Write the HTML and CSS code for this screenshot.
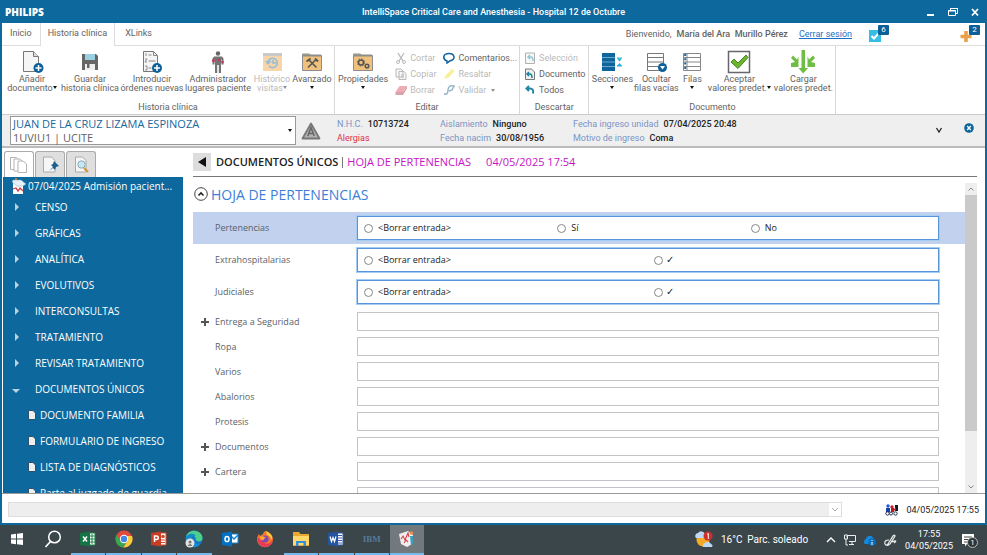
FILE: index.html
```html
<!DOCTYPE html>
<html lang="es">
<head>
<meta charset="utf-8">
<meta name="viewport" content="width=device-width, initial-scale=1">
<title>IntelliSpace Critical Care and Anesthesia</title>
<link rel="stylesheet" href="styles.css">
</head>
<body>
<div class="window">
  <header class="titlebar">
    <span class="brand">PHILIPS</span>
    <span class="title">IntelliSpace Critical Care and Anesthesia - Hospital 12 de Octubre</span>
    <div class="winbtns">
      <button aria-label="Minimizar"><svg width="12" height="12" viewBox="0 0 12 12"><path d="M2 9h7" stroke="#fff" stroke-width="2"/></svg></button>
      <button aria-label="Restaurar"><svg width="12" height="12" viewBox="0 0 12 12"><path d="M3.5 4V2.5h7v5H9M1.500 4.500h7v5h-7zM1 5h8M3 2.500h8" fill="none" stroke="#fff"/></svg></button>
      <button aria-label="Cerrar"><svg width="12" height="12" viewBox="0 0 12 12"><path d="M3 3l6 6.500M9 3l-6 6.500" stroke="#fff" stroke-width="1.800"/></svg></button>
    </div>
  </header>

  <nav class="tabs">
    <a href="#inicio">Inicio</a>
    <a href="#historia" class="active">Historia clínica</a>
    <a href="#xlinks">XLinks</a>
    <div class="session">
      <span>Bienvenido,</span><b>María del Ara&nbsp; Murillo Pérez</b>
      <a class="logout" href="#salir">Cerrar sesión</a>
      <button class="notif tasks" aria-label="Tareas"><svg width="12" height="12" viewBox="0 0 12 12"><path d="M0 0h12v12H0z" fill="#35bde4"/><path d="M2.500 6l2.500 2.500L9.500 3.500" fill="none" stroke="#fff" stroke-width="2"/></svg><span class="badge">6</span></button>
      <button class="notif alerts" aria-label="Avisos"><svg width="12" height="12" viewBox="0 0 12 12"><path d="M6 1v11M.500 6.500h11" stroke="#e9a04b" stroke-width="3.600"/></svg><span class="badge">2</span></button>
    </div>
  </nav>

  <section class="ribbon" id="historia">
    <div class="group">
      <div class="tools historia">
        <button class="tool"><svg width="24" height="24" viewBox="0 0 24 24"><path d="M3.500 1.500h10l5 5v15h-15z" fill="#f5f5f5" stroke="#777"/><path d="M13.500 1.500v5h5" fill="#ddd" stroke="#777"/><circle cx="18.500" cy="18" r="5" fill="#0d5f98"/><path d="M18.500 15v6M15.500 18h6" stroke="#fff" stroke-width="1.500"/></svg><span>Añadir<br>documento<i class="caret"></i></span></button>
        <button class="tool"><svg width="24" height="24" viewBox="0 0 24 24"><path d="M4 4h14l2 2v14H4z" fill="#666"/><path d="M7 4h10v6H7z" fill="#9bd0e2"/><path d="M7 14h10v6H7z" fill="#eee"/><path d="M9 14h2.500v4H9z" fill="#666"/></svg><span>Guardar<br>historia clínica</span></button>
        <button class="tool"><svg width="24" height="24" viewBox="0 0 24 24"><path d="M3.500 1.500h10l4 4v16h-14z" fill="#f5f5f5" stroke="#777"/><path d="M13.500 1.500v4h4M8.500 5h3M8.500 11h7M8.500 18h3" fill="none" stroke="#888"/><path d="M6 3v3M5 9h2l-2 3h2M5 16h2v4H5" fill="none" stroke="#777" stroke-width=".8"/><circle cx="17" cy="18" r="5" fill="#0d5f98"/><path d="M17 15v6M14 18h6" stroke="#fff" stroke-width="1.500"/></svg><span>Introducir<br>órdenes nuevas</span></button>
        <button class="tool"><svg width="24" height="24" viewBox="0 0 24 24"><circle cx="12" cy="3.500" r="2.200" fill="#666"/><path d="M8 6.500h8l1.500 2v6h-2v-5h-.500V23h-2.200v-8h-1.600v8H9V9.500h-.500v5h-2v-6z" fill="#747474"/><g fill="#c0345c"><circle cx="7.500" cy="10.500" r="1.500"/><circle cx="13" cy="10" r="1.300"/><circle cx="16.500" cy="12" r="1.300"/></g></svg><span>Administrador<br>lugares paciente</span></button>
        <button class="tool dim"><svg width="24" height="24" viewBox="0 0 24 24"><path d="M3 3h19v18H3z" fill="#efa443"/><path d="M3 3h19v3H3z" fill="#888"/><path d="M8 12a4.700 4.700 0 1 1 1 4M6 11l2 2.500 3-2.500M13 10v3h3" fill="none" stroke="#1a6aa4" stroke-width="1.600"/></svg><span>Histórico<br>visitas<i class="caret"></i></span></button>
        <button class="tool"><svg width="24" height="24" viewBox="0 0 24 24"><path d="M2.500 5.500V4h7l1 1.500h11v15h-19z" fill="#efc17c" stroke="#8d8d8d"/><path d="M3 5.500h18" stroke="#8d8d8d" stroke-width="2"/><path d="M8.500 9.500l8 8M16 9.500l-8 8" stroke="#555" stroke-width="1.600"/><path d="M6.500 11.500l4-3M15 8.500l3 3" stroke="#555" stroke-width="2"/></svg><span>Avanzado<br><i class="caret"></i></span></button>
      </div>
      <h2>Historia clínica</h2>
    </div>
    <div class="group">
      <div class="tools editar">
        <button class="tool"><svg width="24" height="24" viewBox="0 0 24 24"><path d="M2.500 5.500V4h7l1 1.500h11v15h-19z" fill="#efc17c" stroke="#8d8d8d"/><path d="M3 5.500h18" stroke="#8d8d8d" stroke-width="2"/><circle cx="10" cy="12.500" r="2.500" fill="none" stroke="#555" stroke-width="1.500"/><circle cx="10" cy="12.500" r="3.600" fill="none" stroke="#555" stroke-dasharray="1.400 1.400"/><circle cx="16" cy="16" r="1.800" fill="none" stroke="#555" stroke-width="1.500"/></svg><span>Propiedades<br><i class="caret"></i></span></button>
        <div class="list">
          <button class="dim"><svg width="12" height="12" viewBox="0 0 12 12"><path d="M3 1l5 8M9 1L4 9" stroke="#666" stroke-width="1.300"/><circle cx="3" cy="10" r="1.500" fill="none" stroke="#666"/><circle cx="9" cy="10" r="1.500" fill="none" stroke="#666"/></svg>Cortar</button>
          <button class="dim"><svg width="12" height="12" viewBox="0 0 12 12"><path d="M1 1h5l2 2v6H1zM4 3.500h5l2 2v6H4z" fill="#eee" stroke="#666"/><path d="M6 7h3M6 9h3" stroke="#666"/></svg>Copiar</button>
          <button class="dim"><svg width="12" height="12" viewBox="0 0 12 12"><path d="M4.500 2H12L8 8H.500z" fill="#e0485c"/><path d="M.500 8H8l4-6v2.500L8 11H.500z" fill="#ad3145"/></svg>Borrar</button>
        </div>
        <div class="list">
          <button><svg width="12" height="12" viewBox="0 0 12 12"><path d="M4 9C-1 7 0 1.500 6 1.500S13 8 7 8.800L4 11z" fill="#fff" stroke="#1262a0" stroke-width="1.500"/></svg>Comentarios...</button>
          <button class="dim"><svg width="12" height="12" viewBox="0 0 12 12"><path d="M3 7l6-6 2.500 2L6 9.500 1 11z" fill="#f0df20"/></svg>Resaltar</button>
          <button class="dim"><svg width="12" height="12" viewBox="0 0 12 12"><path d="M1 10c3 1 4-1 4-4s2-5 6-4L9 6 6 7M1 10h3" fill="none" stroke="#175f8c" stroke-width="1.500"/></svg>Validar<i class="caret"></i></button>
        </div>
      </div>
      <h2>Editar</h2>
    </div>
    <div class="group">
      <div class="tools descartar">
        <div class="list">
          <button class="dim"><svg width="12" height="12" viewBox="0 0 12 12"><path d="M1.500 1h9v10.500h-9z" fill="#eee" stroke="#555"/><path d="M4 5h3q2 0 2 4M6 3L4 5l2 2" fill="none" stroke="#16839c" stroke-width="1.500"/></svg>Selección</button>
          <button><svg width="12" height="12" viewBox="0 0 12 12"><path d="M1.500 1h6l3 3v7.500h-9z" fill="#eee" stroke="#777"/><path d="M3 6h3q2 0 2 4M5 4L3 6l2 2" fill="none" stroke="#16839c" stroke-width="1.500"/></svg>Documento</button>
          <button><svg width="12" height="12" viewBox="0 0 12 12"><path d="M3 4.500h3q4 0 3 5M5 2L2.500 4.500 5 7" fill="none" stroke="#2487a5" stroke-width="2"/></svg>Todos</button>
        </div>
      </div>
      <h2>Descartar</h2>
    </div>
    <div class="group">
      <div class="tools documento">
        <button class="tool"><svg width="24" height="24" viewBox="0 0 24 24"><path d="M2 3h13v18H2z" fill="#0d659d"/><path d="M2 7.500h13M2 12h13M2 16.500h13" stroke="#8cbad6" stroke-width=".8"/><path d="M17 8h5M17 16h5" stroke="#1fb4d8"/><path d="M17 8.500h5L19.500 11.500zM17 16h5l-2.500-3z" fill="#1fb4d8"/></svg><span>Secciones<br><i class="caret"></i></span></button>
        <button class="tool"><svg width="24" height="24" viewBox="0 0 24 24"><path d="M3.500 3.500h16v17h-16zM3 7.500h17M3 12h17M3 16.500h17" fill="none" stroke="#777"/><circle cx="18.500" cy="17.500" r="4.500" fill="#0d5f98"/><path d="M16 16h5l-2.500 3.500z" fill="#fff"/></svg><span>Ocultar<br>filas vacías</span></button>
        <button class="tool"><svg width="24" height="24" viewBox="0 0 24 24"><path d="M3.500 3.500h17v17h-17zM3 7.500h18M3 12h18M3 16.500h18M7 3v18" fill="none" stroke="#888"/><path d="M5.200 4v17" stroke="#1869a3" stroke-width="2" stroke-dasharray="2 2.300"/></svg><span>Filas<br><i class="caret"></i></span></button>
        <button class="tool"><svg width="24" height="24" viewBox="0 0 24 24"><path d="M1.500 1.500h21v21h-21z" fill="#fff" stroke="#66666c" stroke-width="1.500"/><path d="M4 12l3-3 4 4 8-8 2 2.500L11 18.500z" fill="#6cb52d" stroke="#438728"/></svg><span>Aceptar<br>valores predet.<i class="caret"></i></span></button>
        <button class="tool"><svg width="24" height="24" viewBox="0 0 24 24"><path d="M10.500 0h3.500v18h3l-4.800 5.500L7.500 18h3zM0 17V13L4 12 0 8l2-2.500 4 4 1.500-3V17zM24 17V13L20 12 24 8l-2-2.500-4 4-1.500-3V17z" fill="#70bd45"/></svg><span>Cargar<br>valores predet.</span></button>
      </div>
      <h2>Documento</h2>
    </div>
  </section>

  <section class="patient">
    <button class="picker"><span><strong>JUAN DE LA CRUZ LIZAMA ESPINOZA</strong><small>1UVIU1 | UCITE</small></span><i class="caret"></i></button>
    <svg class="allergy" width="20" height="18" viewBox="0 0 20 18"><path d="M10 1.500L18.500 16.500H1.500z" fill="#b2b2b2" stroke="#777" stroke-width="1.800" stroke-linejoin="round"/><path d="M6.800 14L10 5.500l3.200 8.500M8 11.500h4" fill="none" stroke="#666" stroke-width="1.500"/></svg>
    <dl class="facts first"><div><dt>N.H.C.</dt><dd>10713724</dd></div><div><dt class="alert">Alergias</dt></div></dl>
    <dl class="facts second"><div><dt>Aislamiento</dt><dd>Ninguno</dd></div><div><dt>Fecha nacim</dt><dd>30/08/1956</dd></div></dl>
    <dl class="facts third"><div><dt>Fecha ingreso unidad</dt><dd>07/04/2025 20:48</dd></div><div><dt>Motivo de ingreso</dt><dd>Coma</dd></div></dl>
    <button class="more" aria-label="Mostrar más"><svg width="8" height="8" viewBox="0 0 8 8"><path d="M1.500 1L4 5l2.500-4" fill="none" stroke="#222" stroke-width="1.300"/></svg></button>
    <button class="close" aria-label="Cerrar paciente"><svg width="10" height="16" viewBox="0 0 10 16"><circle cx="5" cy="5" r="4.800" fill="#0d659d"/><path d="M3.200 3l3.600 4M6.800 3L3.200 7" stroke="#fff" stroke-width="1.300"/></svg></button>
  </section>

  <main class="workspace">
    <aside class="sidebar">
      <div class="viewtabs">
        <button class="on" aria-label="Documentos"><svg width="20" height="20" viewBox="0 0 20 20"><g fill="#fff" stroke="#b5b5b5"><path d="M1.500 2.500h6l3 3v9h-9z"/><path d="M5 4h6l3 3v9H5z"/><path d="M9 6h5l3.500 3v8.500H9z"/></g></svg></button>
        <button aria-label="Fijados"><svg width="20" height="20" viewBox="0 0 20 20"><path d="M3.500 2h8l3.500 3.500V17H3.500z" fill="#f6f6f6" stroke="#aaa"/><path d="M9 16l4-4-2-2 2-1 1-3 5 5-3 1-1 3-2-2z" fill="#1c5f8c"/></svg></button>
        <button aria-label="Buscar"><svg width="20" height="20" viewBox="0 0 20 20"><path d="M4.500 2h7l3.500 3.500V17H4.500z" fill="#f6f6f6" stroke="#aaa"/><path d="M13 13l4 4" stroke="#d79335" stroke-width="2.200"/><circle cx="10.500" cy="9.500" r="3.700" fill="#c4e7f3" stroke="#8aabb9"/></svg></button>
      </div>
      <nav class="tree">
        <a class="root" href="#admision"><svg width="16" height="16" viewBox="0 0 16 16"><path d="M2 5h10v11H2z" fill="#fff"/><path d="M2 2h8l5 4-3 2H6L1 4z" fill="#e8f1f7" stroke="#7aa9c6" stroke-width=".5"/><path d="M5 0v2" stroke="#dd873b" stroke-width="1.500"/><path d="M2 11l3-1 2 3 2-3 3 3" fill="none" stroke="#d23844" stroke-width="1.300"/></svg>07/04/2025 Admisión pacient...</a>
        <a class="branch" href="#censo">CENSO</a>
        <a class="branch" href="#graficas">GRÁFICAS</a>
        <a class="branch" href="#analitica">ANALÍTICA</a>
        <a class="branch" href="#evolutivos">EVOLUTIVOS</a>
        <a class="branch" href="#interconsultas">INTERCONSULTAS</a>
        <a class="branch" href="#tratamiento">TRATAMIENTO</a>
        <a class="branch" href="#revisar">REVISAR TRATAMIENTO</a>
        <a class="branch open" href="#unicos">DOCUMENTOS ÚNICOS</a>
        <a class="leaf" href="#familia"><svg width="8" height="10" viewBox="0 0 8 10"><path d="M.500.500H5L7.500 3v6.500h-7z" fill="#eee" stroke="#29516b"/></svg>DOCUMENTO FAMILIA</a>
        <a class="leaf" href="#ingreso"><svg width="8" height="10" viewBox="0 0 8 10"><path d="M.500.500H5L7.500 3v6.500h-7z" fill="#eee" stroke="#29516b"/></svg>FORMULARIO DE INGRESO</a>
        <a class="leaf" href="#diagnosticos"><svg width="8" height="10" viewBox="0 0 8 10"><path d="M.500.500H5L7.500 3v6.500h-7z" fill="#eee" stroke="#29516b"/></svg>LISTA DE DIAGNÓSTICOS</a>
        <a class="leaf" href="#parte"><svg width="8" height="10" viewBox="0 0 8 10"><path d="M.500.500H5L7.500 3v6.500h-7z" fill="#eee" stroke="#29516b"/></svg>Parte al juzgado de guardia</a>
      </nav>
    </aside>

    <section class="document">
      <header class="dochead">
        <button aria-label="Atrás"><svg width="8" height="10" viewBox="0 0 8 10"><path d="M8 0v10L0 5z" fill="#111"/></svg></button>
        <strong>DOCUMENTOS ÚNICOS</strong><i class="sep"></i><span>HOJA DE PERTENENCIAS</span><time>04/05/2025 17:54</time>
      </header>
      <div class="scroller">
        <form class="sheet">
          <h1><button type="button" aria-label="Contraer"><svg width="14" height="14" viewBox="0 0 14 14"><circle cx="7" cy="7" r="6.300" fill="#fff" stroke="#444"/><path d="M4.500 8.500L7 6l2.500 2.500" fill="none" stroke="#222" stroke-width="1.600"/></svg></button>HOJA DE PERTENENCIAS</h1>
          <div class="row choice selected" role="radiogroup" aria-labelledby="l1"><span class="name" id="l1">Pertenencias</span><div class="options"><label><input type="radio" name="p">&lt;Borrar entrada&gt;</label><label><input type="radio" name="p">Sí</label><label><input type="radio" name="p">No</label></div></div>
          <div class="row choice" role="radiogroup" aria-labelledby="l2"><span class="name" id="l2">Extrahospitalarias</span><div class="options"><label><input type="radio" name="e">&lt;Borrar entrada&gt;</label><label class="tick"><input type="radio" name="e">✓</label></div></div>
          <div class="row choice" role="radiogroup" aria-labelledby="l3"><span class="name" id="l3">Judiciales</span><div class="options"><label><input type="radio" name="j">&lt;Borrar entrada&gt;</label><label class="tick"><input type="radio" name="j">✓</label></div></div>
          <div class="entries">
            <div class="row plus"><label class="name" for="f1">Entrega a Seguridad</label><input id="f1" type="text"></div>
            <div class="row"><label class="name" for="f2">Ropa</label><input id="f2" type="text"></div>
            <div class="row"><label class="name" for="f3">Varios</label><input id="f3" type="text"></div>
            <div class="row"><label class="name" for="f4">Abalorios</label><input id="f4" type="text"></div>
            <div class="row"><label class="name" for="f5">Protesis</label><input id="f5" type="text"></div>
            <div class="row plus"><label class="name" for="f6">Documentos</label><input id="f6" type="text"></div>
            <div class="row plus"><label class="name" for="f7">Cartera</label><input id="f7" type="text"></div>
            <div class="row plus"><label class="name" for="f8"></label><input id="f8" type="text" aria-label="Entrada siguiente"></div>
          </div>
        </form>
        <div class="scrollbar">
          <button aria-label="Subir"><svg width="6" height="4" viewBox="0 0 6 4"><path d="M.500 3.500L3 1l2.500 2.500" fill="none" stroke="#888"/></svg></button>
          <div class="thumb"></div><div class="track"></div>
          <button aria-label="Bajar"><svg width="6" height="4" viewBox="0 0 6 4"><path d="M.500.500L3 3 5.500.500" fill="none" stroke="#888"/></svg></button>
        </div>
      </div>
    </section>
  </main>

  <footer class="status">
    <div class="combo"><select aria-label="Mensajes" disabled></select><svg width="8" height="5" viewBox="0 0 8 5"><path d="M1 1l3 3 3-3" fill="none" stroke="#aaa"/></svg></div>
    <svg class="people" width="13" height="12" viewBox="0 0 13 12"><circle cx="3" cy="2" r="1.700" fill="#1c55d8"/><circle cx="7" cy="3" r="1.700" fill="#c8222c"/><path d="M1 4h4v4H1z" fill="#1742a5"/><path d="M6 4h3v4H6z" fill="#b71c25"/><path d="M10 1h3v6h-3z" fill="#141825"/><path d="M8 6l3-3v4z" fill="#b71c25"/><g fill="none" stroke="#26334f"><circle cx="2.500" cy="9.500" r="1.700"/><circle cx="6" cy="9.500" r="1.500"/><circle cx="10.500" cy="9.500" r="1.700"/></g></svg>
    <time>04/05/2025 17:55</time>
  </footer>
</div>

<footer class="taskbar">
  <div class="apps">
    <button aria-label="Inicio de Windows"><svg width="14" height="14" viewBox="0 0 14 14"><path d="M1 2.500l5-.7v4.700H1zM7 1.700L13 1v5.500H7zM1 7.500h5v4.700l-5-.7zM7 7.500h6V13l-6-.7z" fill="#fff"/></svg></button>
    <button aria-label="Buscar en Windows"><svg width="18" height="18" viewBox="0 0 18 18"><circle cx="10.500" cy="7" r="5.800" fill="none" stroke="#fff" stroke-width="1.500"/><path d="M6.500 11.500L1.500 17" stroke="#fff" stroke-width="1.700"/></svg></button>
    <button class="run" aria-label="Excel"><svg width="18" height="18" viewBox="0 0 18 18"><path d="M9 3h7v12H9z" fill="#fff" stroke="#21834c"/><path d="M10 6h6M10 9h6M10 12h6M13 4v10" stroke="#21834c"/><path d="M1 3l10-1.500v15L1 15z" fill="#167343"/><path d="M4 6.500l4 5M8 6.500l-4 5" stroke="#fff" stroke-width="1.500"/></svg></button>
    <button class="run" aria-label="Chrome"><svg width="18" height="18" viewBox="0 0 18 18"><circle cx="9" cy="9" r="8.500" fill="#e04a3b"/><path d="M1.500 5a8.500 8.500 0 0 0 7 12.500L12.500 10 9 12.500 5.500 11z" fill="#36a852"/><path d="M8.500 17.500A8.500 8.500 0 0 0 17 6H9l4 4z" fill="#f8cb3a"/><circle cx="9" cy="9" r="4.200" fill="#fff"/><circle cx="9" cy="9" r="3.200" fill="#4285e4"/></svg></button>
    <button class="run" aria-label="PowerPoint"><svg width="18" height="18" viewBox="0 0 18 18"><path d="M9 3h7v12H9z" fill="#fff" stroke="#d4492c"/><path d="M11 10h4M11 12.500h4" stroke="#d4492c"/><circle cx="13" cy="6.500" r="1.800" fill="#d4492c"/><path d="M1 3l10-1.500v15L1 15z" fill="#c83d23"/><path d="M4.500 12V6h2a1.700 1.700 0 0 1 0 3.500h-2" fill="none" stroke="#fff" stroke-width="1.500"/></svg></button>
    <button class="run" aria-label="Edge"><svg width="18" height="18" viewBox="0 0 18 18"><circle cx="9" cy="9" r="8.500" fill="#1477c9"/><path d="M1 7C2 2 7 0 11 1c5 1 7 5 6.500 8-.500 3-5 3-7 1C12 6 6 4 1 7z" fill="#4bcf8d"/><path d="M1 7c3-4 8-4 10-1-2-1-4 0-4 3s3 6 8 5c-3 4-7 4-10 2C2 14 0 11 1 7z" fill="#158acb"/><circle cx="5" cy="13" r="4.500" fill="#e4e4e4"/><circle cx="5" cy="12" r="1.500" fill="#777"/><path d="M2.500 16q2.500-4 5 0z" fill="#777"/></svg></button>
    <button aria-label="Outlook"><svg width="18" height="18" viewBox="0 0 18 18"><path d="M9 4h8v9H9z" fill="#fff" stroke="#1683d8"/><path d="M10 6l3 3 4-4" fill="none" stroke="#1683d8" stroke-width="1.500"/><path d="M1 3l10-1.500v15L1 15z" fill="#0072c6"/><ellipse cx="6" cy="9" rx="2" ry="2.600" fill="none" stroke="#fff" stroke-width="1.500"/></svg></button>
    <button aria-label="Firefox"><svg width="18" height="18" viewBox="0 0 18 18"><path d="M9 1c5 1 8 4 8 8.500A8 8 0 0 1 1 9c0-2 1-4 2-5l1 2 3-2c0-1 1-2 2-3z" fill="#f4792a"/><path d="M10 1c4 2 7 5 6 9-1-2-3-5-5-5z" fill="#ffd23d"/><path d="M1.500 7C1 13 5 17 9 17c5 0 8-4 7.500-8-1 4-5 6-8 4z" fill="#e93a57"/><circle cx="9" cy="9" r="3.600" fill="#8146b5"/><path d="M4 7c3-2 5 0 6 1-2 0-3 1-2 2-2 1-4-1-4-3z" fill="#ffab31"/></svg></button>
    <button class="run" aria-label="Explorador"><svg width="18" height="18" viewBox="0 0 18 18"><path d="M1 2h6l1.500 2H17v12H1z" fill="#e8a92e"/><path d="M1 6h16v9H1z" fill="#ffd86b"/><path d="M4 16v-5h10v5h-2.500v-3h-5v3z" fill="#328fe0"/></svg></button>
    <button class="run" aria-label="Word"><svg width="18" height="18" viewBox="0 0 18 18"><path d="M9 3h7v12H9z" fill="#fff" stroke="#315aa8"/><path d="M11 5.500h4M11 8h4M11 10.500h4M11 13h4" stroke="#315aa8"/><path d="M1 3l10-1.500v15L1 15z" fill="#2453a0"/><path d="M3 6.500l1.500 5 1.500-4 1.500 4L9 6.500" fill="none" stroke="#fff" stroke-width="1.200"/></svg></button>
    <button class="run ibm">IBM</button>
    <button class="run current" aria-label="IntelliSpace"><svg width="20" height="20" viewBox="0 0 20 20"><path d="M2 5l9-3 5 4-1 9-5 3-6-3z" fill="#f1eeee"/><path d="M4 10l2-3 2 4 3-7 1 4M7 14l2-3 2 2" fill="none" stroke="#d44249" stroke-width="1.100"/><circle cx="14.500" cy="4" r="1.800" fill="#dd9453"/><path d="M13 7h3v8l-2 2z" fill="#3c9dbd"/></svg></button>
  </div>
  <div class="tray">
    <svg width="20" height="18" viewBox="0 0 20 18"><circle cx="8" cy="9" r="6.500" fill="#f7ab28"/><path d="M1 7a3 3 0 0 1 2-5 4 4 0 0 1 7 1v4zM8 16a3 3 0 0 1 2-4 4 4 0 0 1 6 1 2 2 0 0 1 1 3z" fill="#bdd9f6"/><circle cx="13" cy="5" r="4.500" fill="#cf2e2b"/><path d="M12 3.500l1.300-1V8" fill="none" stroke="#fff"/></svg>
    <span class="weather">16°C&nbsp; Parc. soleado</span>
    <svg width="10" height="8" viewBox="0 0 10 8"><path d="M1 6l4-4 4 4" fill="none" stroke="#fff" stroke-width="1.300"/></svg>
    <svg width="12" height="12" viewBox="0 0 12 12"><path d="M3 3.500V1.500h8.500v6H5M5 10.500h5M8 8v2M.500 1v4h3V1zM2 5v6h2" fill="none" stroke="#eee"/></svg>
    <svg width="12" height="12" viewBox="0 0 12 12"><path d="M1 10a3 3 0 0 1 1-5c1-4 6-4 7-1l2 2v4z" fill="#1489df"/><circle cx="8" cy="8" r="3.800" fill="#0870bd"/><path d="M8 6v1M8 8v3" stroke="#fff"/></svg>
    <svg width="13" height="13" viewBox="0 0 13 13"><path d="M4 10L9 2q2-2 2 0L6 10l-3 1zM5 6q-5 0-4 4 1 2 4 1M8 8c4-2 5-1 2 1" fill="none" stroke="#eee" stroke-width="1.200"/></svg>
    <time>17:55<br>04/05/2025</time>
    <button class="center" aria-label="Notificaciones"><svg width="14" height="14" viewBox="0 0 14 14"><path d="M1 1h12v10H6l-2 2.500V11H1z" fill="#fff"/><path d="M3 4h8M3 6.500h8M3 9h4" stroke="#444"/></svg><span>1</span></button>
  </div>
</footer>
</body>
</html>
```
FILE: styles.css
```css
* { box-sizing: border-box; }
:root { --blue: #0d689d; --text: #636363; --narrow: Roboto, "Noto Sans", sans-serif; }
body {
  margin: 0; height: 100vh; display: flex; flex-direction: column; overflow: hidden;
  font: 9px/12px "Open Sans", "Noto Sans", sans-serif; color: var(--text); background: #fff;
}
button { font: inherit; color: inherit; background: none; border: 0; padding: 0; margin: 0; }
a { color: inherit; text-decoration: none; }
svg { display: block; flex: none; }
h1, h2, dl, dd { margin: 0; font-weight: 400; }
.window { flex: 1; min-height: 0; display: flex; flex-direction: column; border: solid var(--blue); border-width: 0 2px 2px; }
.titlebar, .tabs, .ribbon, .facts, .status, .tray { font-family: var(--narrow); }

.titlebar { height: 23px; flex: none; display: grid; grid-template-columns: 1fr auto 1fr; align-items: center; background: var(--blue); color: #fff; font-weight: 500; }
.brand { padding-left: 3px; font: 800 10px/12px "Open Sans", sans-serif; }
.winbtns { display: flex; justify-content: flex-end; gap: 10px; padding-right: 4px; }

.tabs { height: 23px; flex: none; display: flex; border-bottom: 1px solid #ddd; }
.tabs > a { padding: 4px 8px; }
.tabs > .active { height: 23px; padding: 4px 7px; border: solid #ddd; border-width: 0 1px; background: #fff; }
.tabs > a:nth-child(3) { padding-left: 10px; }
.session { margin-left: auto; display: flex; align-items: center; gap: 5px; padding-right: 5px; }
.session b { font-weight: 500; }
.logout { margin-left: 6px; color: #1b6fc4; text-decoration: underline; }
.notif { position: relative; width: 20px; height: 20px; padding-top: 4px; }
.tasks { margin: 0 66px 0 12px; }
.badge { position: absolute; left: 9px; top: 1px; width: 11px; height: 10px; background: #0d5f98; color: #fff; font-size: 8px; line-height: 10px; text-align: center; border-radius: 1px; }

.ribbon { flex: none; height: 69px; display: flex; border-bottom: 1px solid #ccc; }
.group { border-right: 1px solid #d8d8d8; display: flex; flex-direction: column; padding: 0 2px 1px; }
.group h2 { font-size: 9px; line-height: 12px; text-align: center; }
.tools { flex: 1; display: flex; padding-top: 4px; }
.historia { display: grid; grid-template-columns: 56px 60px 64px 68px 40px 40px; }
.documento { display: grid; grid-template-columns: 42px 46px 26px 68px 60px; }
.tool { display: flex; flex-direction: column; align-items: center; justify-content: flex-start; white-space: nowrap; line-height: 9px; gap: 1px; }
.tool span { width: max-content; }
.dim { opacity: .45; }
.caret { display: inline-block; border: 2px solid transparent; border-top: 3px solid #111; border-bottom: 0; margin-left: 2px; vertical-align: 2px; }
.tool br + .caret { margin-left: 0; }
.editar { gap: 7px; padding-left: 1px; }
.list { display: flex; flex-direction: column; }
.list button { display: flex; align-items: center; gap: 3px; height: 16px; white-space: nowrap; }
.descartar { padding-left: 2px; padding-right: 1px; }

.patient { flex: none; height: 33px; display: flex; align-items: center; background: #efefef; border-bottom: 2px solid #bbb; padding-left: 8px; }
.picker { flex: none; width: 286px; height: 29px; border: 1px solid #999; background: #fff; display: flex; align-items: center; justify-content: space-between; text-align: left; padding: 0 3px 0 2px; }
.picker strong, .picker small { display: block; font-size: 11px; line-height: 14px; font-weight: 400; }
.picker strong { color: #17679c; }
.allergy { margin: 0 16px 0 5px; }
.facts { line-height: 14px; flex: none; }
.facts div { display: flex; gap: 5px; }
.facts dt { color: #7b94c4; }
.facts dt.alert { color: #dc3248; }
.facts dd { color: #222; font-weight: 500; }
.first { width: 103px; }
.second { width: 133px; }
.more { margin-left: auto; }
.close { margin: 0 11px 0 21px; }

.workspace { flex: 1; min-height: 0; display: flex; border-bottom: 1px solid #999; }
.sidebar { width: 181px; flex: none; display: flex; flex-direction: column; padding-left: 1px; }
.viewtabs { display: flex; gap: 1px; padding: 3px 0 0 1px; flex: none; }
.viewtabs button { width: 30px; height: 26px; border: 1px solid #aaa; border-bottom: 0; border-radius: 3px 3px 0 0; display: grid; place-items: center; background: #dfdfdf; }
.viewtabs .on { background: #fff; }
.tree { flex: 1; min-height: 0; overflow: hidden; background: var(--blue); color: #fff; font-size: 10px; }
.tree a { display: flex; align-items: center; height: 26px; white-space: nowrap; }
.tree .root { height: 17px; padding-left: 8px; gap: 1px; }
.branch::before { content: ""; border: 4px solid transparent; border-left: 4px solid #b9d2e1; border-right: 0; margin: 0 16px 0 12px; }
.branch.open::before { border: 4px solid transparent; border-top-color: #b9d2e1; border-bottom: 0; margin: 3px 15px 0 9px; }
.leaf { padding-left: 25px; gap: 4px; }

.document { flex: 1; min-width: 0; display: flex; flex-direction: column; padding: 0 8px 0 10px; }
.dochead { height: 29px; flex: none; display: flex; align-items: center; border-bottom: 1px solid #777; font-size: 11px; color: #c514c5; white-space: nowrap; }
.dochead button { width: 18px; height: 18px; display: grid; place-items: center; background: #ddd; margin-right: 5px; }
.dochead strong { color: #222; font-weight: 600; }
.sep { width: 1px; height: 11px; background: #777; margin: 0 4px; }
.dochead time { margin-left: 15px; }
.scroller { flex: 1; min-height: 0; display: flex; padding-top: 6px; }
.sheet { flex: 1; min-width: 0; overflow: hidden; }
.sheet h1 { height: 29px; padding: 4px 0 0 1px; display: flex; align-items: flex-start; gap: 3px; font-size: 14px; line-height: 16px; color: #3b7fd8; }
.row { height: 25px; display: grid; grid-template-columns: 164px 1fr; align-items: center; padding-right: 26px; }
.row.choice { height: 32px; }
.entries { padding-top: 1px; }
.selected { background: #c1d1ee; }
.name { padding-left: 22px; color: #5b6168; }
.plus .name { padding-left: 8px; display: flex; align-items: center; gap: 6px; }
.plus .name::before { content: ""; width: 8px; height: 8px; background: linear-gradient(#555, #555) center / 8px 2px no-repeat, linear-gradient(#555, #555) center / 2px 8px no-repeat; }
.row > input { width: 100%; height: 19px; border: 1px solid #c4c4c8; background: #fff; padding: 0 3px; font: inherit; }
.options { height: 24px; border: 1px solid #5795d8; box-shadow: 0 0 0 1px #a5ccf3; background: #fff; display: grid; grid-auto-flow: column; grid-auto-columns: 1fr; align-items: center; color: #222; }
.options label { display: flex; align-items: center; gap: 5px; padding-left: 6px; }
.options .tick { font: 10px/12px "DejaVu Sans", sans-serif; gap: 3px; }
.options input { appearance: none; width: 9px; height: 9px; margin: 0; border: 1px solid #888; border-radius: 50%; background: #fff; }
.scrollbar { width: 12px; flex: none; display: flex; flex-direction: column; background: #eee; }
.scrollbar button { height: 12px; display: grid; place-items: center; }
.thumb { flex: 236; background: #cacaca; }
.track { flex: 50; }

.status { height: 29px; flex: none; display: flex; align-items: center; padding: 2px 6px 0 6px; color: #222; }
.combo { position: relative; width: 834px; flex: 0 1 834px; margin-right: auto; }
.combo select { display: block; appearance: none; width: 100%; height: 15px; border: 1px solid #ddd; border-right: 13px solid #fff; background: #eee; outline: 1px solid #ddd; outline-offset: -1px; opacity: 1; }
.combo svg { position: absolute; right: 3px; top: 5px; }
.people { margin-right: 8px; }

.taskbar { height: 30px; flex: none; display: flex; background: #3b464b; color: #fff; }
.apps { width: 43%; flex: none; display: grid; grid-auto-flow: column; grid-auto-columns: 1fr; column-gap: 1px; }
.apps button { display: grid; place-items: center; border-bottom: 2px solid transparent; }
.apps .run { border-bottom-color: #76b9ed; }
.apps .current { background: #71797d; }
.apps .ibm { font: 700 9px "Liberation Serif", serif; color: #567998; }
.tray { margin-left: auto; display: flex; align-items: center; gap: 8px; padding-right: 12px; white-space: nowrap; }
.tray > svg:first-child { margin-right: -2px; }
.weather { font-size: 10px; margin-right: 10px; }
.tray time { text-align: center; }
.center { position: relative; }
.center span { position: absolute; left: 6px; top: 4px; width: 11px; height: 11px; border-radius: 50%; border: 1px solid #bbb; background: #333; font-size: 8px; line-height: 9px; text-align: center; }
```
